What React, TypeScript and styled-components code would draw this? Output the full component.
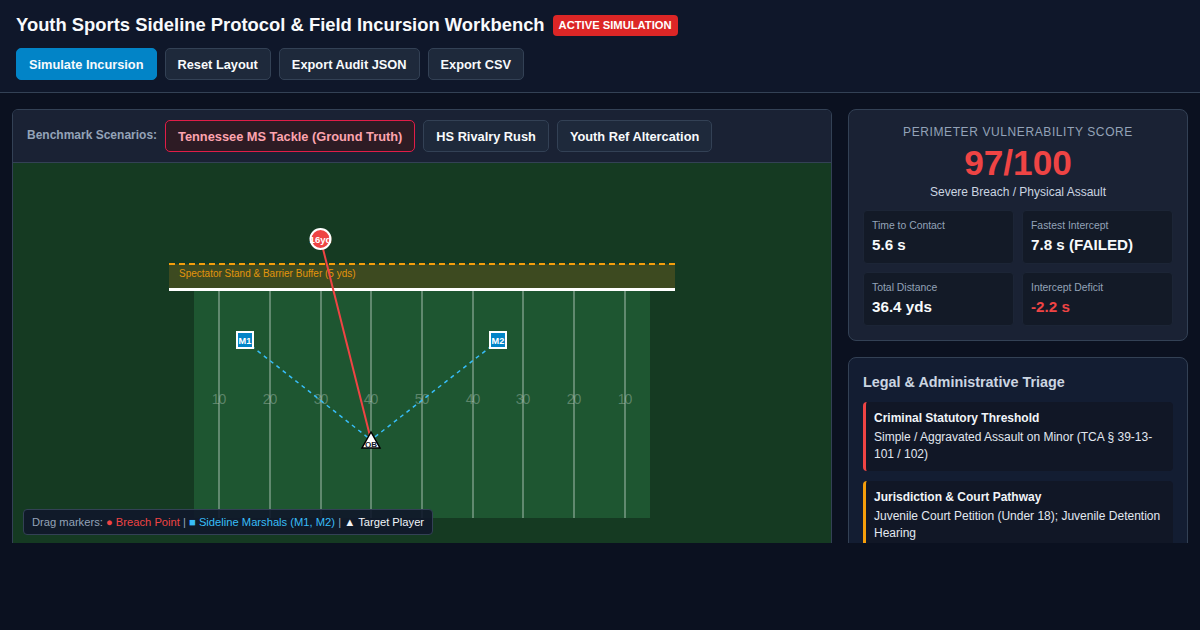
import styled, { createGlobalStyle } from "styled-components";

const GlobalStyle = createGlobalStyle`
  html, body {
    margin: 0;
    padding: 0;
    background: #0b1120;
  }
  * {
    box-sizing: border-box;
  }
  body {
    font-family: "Liberation Sans", Arial, sans-serif;
    color: #f1f5f9;
  }
`;

const yardLines = [
  { x: 219, label: "10" },
  { x: 270, label: "20" },
  { x: 321, label: "30" },
  { x: 371, label: "40" },
  { x: 422, label: "50" },
  { x: 473, label: "40" },
  { x: 523, label: "30" },
  { x: 574, label: "20" },
  { x: 625, label: "10" },
];

const metrics = [
  { label: "Time to Contact", value: "5.6 s" },
  { label: "Fastest Intercept", value: "7.8 s (FAILED)" },
  { label: "Total Distance", value: "36.4 yds" },
  { label: "Intercept Deficit", value: "-2.2 s", danger: true },
];

const FieldDrawing = () => (
  <FieldSvg viewBox="0 163 818 400" width="818" height="400">
    <rect x="181" y="291" width="456" height="227" fill="#1e5631" />
    <rect x="156" y="264" width="506" height="26" fill="#3d4a20" />
    <line x1="156" y1="264" x2="662" y2="264" stroke="#f59e0b" strokeWidth="2" strokeDasharray="6 4" />
    <line x1="156" y1="289.5" x2="662" y2="289.5" stroke="#ffffff" strokeWidth="3" />
    <text x="166" y="277" fill="#f59e0b" fontSize="10" fontFamily="Liberation Sans" opacity="0.9">
      Spectator Stand &amp; Barrier Buffer (5 yds)
    </text>
    {yardLines.map((line) => (
      <g key={line.x}>
        <line x1={line.x - 13} y1="291" x2={line.x - 13} y2="518" stroke="#ffffff" strokeOpacity="0.3" strokeWidth="2" />
        <text x={line.x - 13.5} y="404" textAnchor="middle" fill="#ffffff" fillOpacity="0.28" fontSize="14" letterSpacing="-1" fontFamily="Liberation Sans">
          {line.label}
        </text>
      </g>
    ))}
    <line x1="232" y1="341" x2="358" y2="440" stroke="#38bdf8" strokeWidth="1.5" strokeDasharray="4 4" />
    <line x1="485" y1="341" x2="358" y2="440" stroke="#38bdf8" strokeWidth="1.5" strokeDasharray="4 4" />
    <line x1="307.5" y1="239" x2="358" y2="440" stroke="#ef4444" strokeWidth="2" />
    <circle cx="307.5" cy="239" r="10" fill="#ef4444" stroke="#ffffff" strokeWidth="2" />
    <text x="307.5" y="242.5" textAnchor="middle" fill="#ffffff" fontSize="9.6" fontWeight="700" fontFamily="Liberation Sans">
      16yd
    </text>
    <rect x="224" y="332" width="16" height="16" fill="#0284c7" stroke="#ffffff" strokeWidth="2" />
    <text x="232" y="343.5" textAnchor="middle" fill="#ffffff" fontSize="9.2" fontWeight="700" fontFamily="Liberation Sans">M1</text>
    <rect x="477" y="332" width="16" height="16" fill="#0284c7" stroke="#ffffff" strokeWidth="2" />
    <text x="485" y="343.5" textAnchor="middle" fill="#ffffff" fontSize="9.2" fontWeight="700" fontFamily="Liberation Sans">M2</text>
    <polygon points="358,432 349,448 367,448" fill="#ffffff" stroke="#000000" strokeWidth="1.5" />
    <text x="358" y="446.5" textAnchor="middle" fill="#0f172a" fontSize="8" fontWeight="700" fontFamily="Liberation Sans">QB</text>
  </FieldSvg>
);

export default function App() {
  return (
    <>
      <GlobalStyle />
      <Page>
        <Header>
          <TitleRow>
            <Title>Youth Sports Sideline Protocol &amp; Field Incursion Workbench</Title>
            <StatusBadge>ACTIVE SIMULATION</StatusBadge>
          </TitleRow>
          <Toolbar>
            <ActionButton $primary>Simulate Incursion</ActionButton>
            <ActionButton>Reset Layout</ActionButton>
            <ActionButton>Export Audit JSON</ActionButton>
            <ActionButton>Export CSV</ActionButton>
          </Toolbar>
        </Header>
        <Main>
          <FieldPanel>
            <ScenarioBar>
              <ScenarioLabel>Benchmark Scenarios:</ScenarioLabel>
              <ScenarioButton $active>Tennessee MS Tackle (Ground Truth)</ScenarioButton>
              <ScenarioButton>HS Rivalry Rush</ScenarioButton>
              <ScenarioButton>Youth Ref Altercation</ScenarioButton>
            </ScenarioBar>
            <Canvas>
              <FieldDrawing />
              <Legend>
                Drag markers: <Red>● Breach Point</Red> | <Blue>■ Sideline Marshals (M1, M2)</Blue> |{" "}
                <White>▲ Target Player</White>
              </Legend>
            </Canvas>
          </FieldPanel>
          <SideColumn>
            <ScoreCard>
              <ScoreLabel>PERIMETER VULNERABILITY SCORE</ScoreLabel>
              <ScoreValue>97/100</ScoreValue>
              <ScoreCaption>Severe Breach / Physical Assault</ScoreCaption>
              <MetricGrid>
                {metrics.map((metric) => (
                  <MetricBox key={metric.label}>
                    <MetricLabel>{metric.label}</MetricLabel>
                    <MetricValue $danger={metric.danger}>{metric.value}</MetricValue>
                  </MetricBox>
                ))}
              </MetricGrid>
            </ScoreCard>
            <TriageCard>
              <TriageTitle>Legal &amp; Administrative Triage</TriageTitle>
              <TriageItem $accent="#ef4444">
                <TriageHeading>Criminal Statutory Threshold</TriageHeading>
                <TriageText>Simple / Aggravated Assault on Minor (TCA § 39-13-101 / 102)</TriageText>
              </TriageItem>
              <TriageItem $accent="#f59e0b">
                <TriageHeading>Jurisdiction &amp; Court Pathway</TriageHeading>
                <TriageText>Juvenile Court Petition (Under 18); Juvenile Detention Hearing</TriageText>
              </TriageItem>
            </TriageCard>
          </SideColumn>
        </Main>
      </Page>
    </>
  );
}

const Page = styled.div`
  height: 630px;
  overflow: hidden;
  background: #0b1120;
`;

const Header = styled.header`
  height: 93px;
  padding: 14px 16px 0;
  background: #0f172a;
  border-bottom: 1px solid #334155;
`;

const TitleRow = styled.div`
  display: flex;
  align-items: center;
  gap: 8px;
  height: 22px;
`;

const Title = styled.h1`
  margin: 0;
  font-size: 18.4px;
  line-height: 22px;
  font-weight: 700;
  color: #f8fafc;
`;

const StatusBadge = styled.span`
  background: #dc2626;
  color: #ffffff;
  font-size: 11.2px;
  font-weight: 700;
  line-height: 13px;
  padding: 4px 6px;
  border-radius: 4px;
`;

const Toolbar = styled.div`
  display: flex;
  gap: 8px;
  margin-top: 12px;
`;

const ActionButton = styled.button<{ $primary?: boolean }>`
  height: 32px;
  padding: 0 12px;
  border-radius: 5px;
  border: 1px solid ${(p) => (p.$primary ? "#0284c7" : "#334155")};
  background: ${(p) => (p.$primary ? "#0284c7" : "#1e293b")};
  color: #f8fafc;
  font-family: inherit;
  font-size: 12.8px;
  font-weight: 700;
`;

const Main = styled.main`
  height: 450px;
  overflow: hidden;
  display: grid;
  grid-template-columns: 820px 340px;
  gap: 16px;
  padding: 16px 12px 0;
  align-items: start;
`;

const FieldPanel = styled.section`
  background: #0f172a;
  border: 1px solid #334155;
  border-radius: 6px;
  overflow: hidden;
`;

const ScenarioBar = styled.div`
  height: 53px;
  display: flex;
  align-items: center;
  gap: 8px;
  padding: 0 14px;
  background: #1a2234;
  border-bottom: 1px solid #334155;
`;

const ScenarioLabel = styled.span`
  font-size: 12px;
  font-weight: 700;
  color: #94a3b8;
  position: relative;
  top: -1px;
`;

const ScenarioButton = styled.button<{ $active?: boolean }>`
  height: 32px;
  padding: 0 12px;
  border-radius: 5px;
  border: 1px solid ${(p) => (p.$active ? "#e11d48" : "#334155")};
  background: ${(p) => (p.$active ? "#2d1b24" : "#1e293b")};
  color: ${(p) => (p.$active ? "#fda4af" : "#f8fafc")};
  font-family: inherit;
  font-size: 12.8px;
  font-weight: 700;
`;

const Canvas = styled.div`
  position: relative;
  height: 400px;
  background: #153a22;
`;

const FieldSvg = styled.svg`
  display: block;
`;

const Legend = styled.div`
  position: absolute;
  left: 10px;
  top: 346px;
  height: 26px;
  padding: 0 8px;
  display: flex;
  align-items: center;
  white-space: pre;
  font-size: 11.2px;
  color: #94a3b8;
  background: rgba(15, 23, 42, 0.9);
  border: 1px solid #334155;
  border-radius: 4px;
`;

const Red = styled.span`
  color: #ef4444;
`;

const Blue = styled.span`
  color: #38bdf8;
`;

const White = styled.span`
  color: #f1f5f9;
`;

const SideColumn = styled.div`
  display: flex;
  flex-direction: column;
  gap: 16px;
`;

const ScoreCard = styled.section`
  height: 232px;
  padding: 14px;
  background: #1a2234;
  border: 1px solid #334155;
  border-radius: 8px;
  text-align: center;
`;

const ScoreLabel = styled.div`
  font-size: 12px;
  line-height: 16px;
  letter-spacing: 0.6px;
  color: #94a3b8;
`;

const ScoreValue = styled.div`
  font-size: 35.2px;
  line-height: 41px;
  margin-top: 2px;
  font-weight: 700;
  color: #ef4444;
`;

const ScoreCaption = styled.div`
  font-size: 12px;
  line-height: 14px;
  margin-top: 2px;
  color: #cbd5e1;
`;

const MetricGrid = styled.div`
  display: grid;
  grid-template-columns: 1fr 1fr;
  gap: 8px;
  margin-top: 11px;
  text-align: left;
`;

const MetricBox = styled.div`
  height: 54px;
  padding: 8px;
  background: #131a27;
  border: 1px solid #1c2536;
  border-radius: 4px;
`;

const MetricLabel = styled.div`
  font-size: 10.4px;
  line-height: 13px;
  color: #94a3b8;
`;

const MetricValue = styled.div<{ $danger?: boolean }>`
  font-size: 15.2px;
  line-height: 20px;
  margin-top: 3px;
  font-weight: 700;
  color: ${(p) => (p.$danger ? "#ef4444" : "#f8fafc")};
`;

const TriageCard = styled.section`
  padding: 14px;
  background: #131d32;
  border: 1px solid #334155;
  border-radius: 8px;
`;

const TriageTitle = styled.h2`
  margin: 0 0 10px;
  font-size: 14.4px;
  line-height: 20px;
  font-weight: 700;
  color: #cbd5e1;
`;

const TriageItem = styled.div<{ $accent: string }>`
  padding: 8px;
  margin-bottom: 10px;
  background: #111726;
  border-left: 3px solid ${(p) => p.$accent};
  border-radius: 4px;
`;

const TriageHeading = styled.div`
  font-size: 12px;
  line-height: 17px;
  font-weight: 700;
  color: #f1f5f9;
`;

const TriageText = styled.div`
  font-size: 12px;
  line-height: 17px;
  margin-top: 2px;
  color: #e2e8f0;
`;
